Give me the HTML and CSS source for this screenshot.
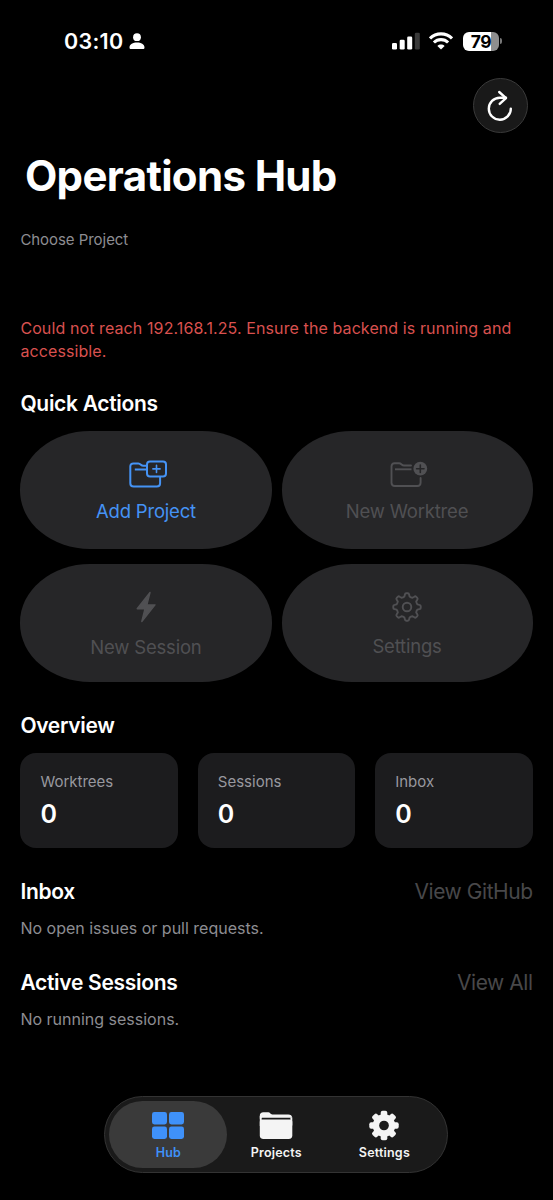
FILE: index.html
```html
<!DOCTYPE html>
<html lang="en">
  <head>
    <meta charset="UTF-8" />
    <meta name="viewport" content="width=device-width, initial-scale=1" />
    <title>Operations Hub</title>
    <link rel="stylesheet" href="styles.css">
  </head>
  <body>
    <!-- status bar -->
    <div class="status-bar">
      <div class="status-left">
        <span class="time">03:10</span>
        <svg width="16" height="17" viewBox="0 0 16 17" fill="#fff">
          <circle cx="8" cy="4.2" r="3.9" />
          <path d="M0.5 14.6C0.5 11.4 4 9.6 8 9.6s7.5 1.8 7.5 5c0 1-.6 1.5-1.6 1.5H2.1c-1 0-1.6-.5-1.6-1.5z" />
        </svg>
      </div>
      <div class="status-right">
        <svg width="28" height="18" viewBox="0 0 28 18" fill="#fff">
          <rect x="0" y="11" width="5" height="6.5" rx="1.3" />
          <rect x="7.7" y="7.8" width="5" height="9.7" rx="1.3" />
          <rect x="15.2" y="4.4" width="5" height="13.1" rx="1.3" />
          <rect x="22.8" y="0.8" width="5" height="16.7" rx="1.3" fill="#3a3a3a" />
        </svg>
        <svg class="wifi" width="24" height="18" viewBox="0 0 24 18" fill="none" stroke="#fff" stroke-width="3.1">
          <path d="M1 6.4C7 0.4 17 0.4 23 6.4" />
          <path d="M4.9 10.5C8.9 6.6 15.1 6.6 19.1 10.5" />
          <path d="M12 17.6l-3.6-3.7c2-1.9 5.2-1.9 7.2 0z" fill="#fff" stroke="none" />
        </svg>
        <div class="battery"><span>79</span></div>
        <div class="battery-cap"></div>
      </div>
    </div>

    <main>
      <button class="refresh">
        <svg width="28" height="32" viewBox="0 0 28 32" fill="none" stroke="#fff" stroke-width="2.4" stroke-linecap="round" stroke-linejoin="round">
          <path d="M24.8 18.6A11 11 0 1 1 13.8 7.7H20" />
          <path d="M13.2 2L20 8.1l-6.3 5.8" />
        </svg>
      </button>
      <h1>Operations Hub</h1>
      <p class="choose">Choose Project</p>
      <p class="error">Could not reach 192.168.1.25. Ensure the backend is running and accessible.</p>

      <h2 class="quick-title">Quick Actions</h2>
      <div class="actions">
        <button class="action active">
          <svg class="folder" width="38" height="28" viewBox="0 0 38 28" fill="none" stroke="currentColor" stroke-width="2" stroke-linecap="round" stroke-linejoin="round">
            <path d="M17.5 5.8h-3.2c-1.2 0-1.6-.3-2.4-1.1-.9-.9-1.4-1.3-2.6-1.3H4.4C2.4 3.4 1.3 4.5 1.3 6.6V23.2c0 2.1 1.2 3.3 3.4 3.3h23.1c2.2 0 3.3-1.2 3.3-3.3V17.5" />
            <path d="M5.8 9.5h11.5" stroke-linecap="butt" />
            <rect x="18" y="1.4" width="19" height="15" rx="3" />
            <path d="M27.5 5.3v7.2M23.9 8.9h7.2" stroke-width="1.6" />
          </svg>
          <span>Add Project</span>
        </button>
        <button class="action">
          <svg class="folder" width="38" height="28" viewBox="0 0 38 28" fill="none" stroke="currentColor" stroke-width="1.9" stroke-linecap="round" stroke-linejoin="round">
            <path d="M21 5.5h-7c-1.2 0-1.6-.3-2.4-1-.9-.8-1.4-1.2-2.6-1.2H4.5C2.5 3.3 1.5 4.4 1.5 6.4V22.8c0 2.1 1.2 3.2 3.3 3.2h22.6c2.1 0 3.2-1.1 3.2-3.2V18" />
            <path d="M5 9.3h16.5" stroke-linecap="butt" />
            <circle cx="30.3" cy="8.7" r="6.9" fill="currentColor" stroke="none" />
            <path d="M30.3 5v7.4M26.6 8.7h7.4" stroke="#262628" stroke-width="1.6" />
          </svg>
          <span>New Worktree</span>
        </button>
        <button class="action">
          <svg class="bolt" width="20" height="32" viewBox="0 0 20 32" fill="currentColor" stroke="currentColor" stroke-width="1.4" stroke-linejoin="round">
            <path d="M14 1.5L1.2 17.7H9L5.8 30.5 19 13.9H10.9z" />
          </svg>
          <span>New Session</span>
        </button>
        <button class="action settings">
          <svg width="30" height="30" viewBox="-15 -15 30 30" fill="none" stroke="currentColor" stroke-width="1.9" stroke-linejoin="round">
            <path d="M-2.1-12.4Q-1.9-13.7-.9-13.7H.9Q1.9-13.7 2.1-12.4L2.6-10.4Q3.8-9.4 5.5-9.2L7.3-10.3Q8.3-11 9.05-10.3L10.3-9.05Q11-8.3 10.3-7.3L9.2-5.5Q9.4-3.8 10.4-2.6L12.4-2.1Q13.7-1.9 13.7-.9V.9Q13.7 1.9 12.4 2.1L10.4 2.6Q9.4 3.8 9.2 5.5L10.3 7.3Q11 8.3 10.3 9.05L9.05 10.3Q8.3 11 7.3 10.3L5.5 9.2Q3.8 9.4 2.6 10.4L2.1 12.4Q1.9 13.7.9 13.7H-.9Q-1.9 13.7-2.1 12.4L-2.6 10.4Q-3.8 9.4-5.5 9.2L-7.3 10.3Q-8.3 11-9.05 10.3L-10.3 9.05Q-11 8.3-10.3 7.3L-9.2 5.5Q-9.4 3.8-10.4 2.6L-12.4 2.1Q-13.7 1.9-13.7.9V-.9Q-13.7-1.9-12.4-2.1L-10.4-2.6Q-9.4-3.8-9.2-5.5L-10.3-7.3Q-11-8.3-10.3-9.05L-9.05-10.3Q-8.3-11-7.3-10.3L-5.5-9.2Q-3.8-9.4-2.6-10.4Z" />
            <circle r="4.3" />
          </svg>
          <span>Settings</span>
        </button>
      </div>

      <h2 class="overview-title">Overview</h2>
      <div class="stats">
        <div class="stat"><span>Worktrees</span><strong>0</strong></div>
        <div class="stat"><span>Sessions</span><strong>0</strong></div>
        <div class="stat"><span>Inbox</span><strong>0</strong></div>
      </div>

      <div class="section-head">
        <h2>Inbox</h2>
        <a>View GitHub</a>
      </div>
      <p class="empty">No open issues or pull requests.</p>
      <div class="section-head">
        <h2>Active Sessions</h2>
        <a>View All</a>
      </div>
      <p class="empty">No running sessions.</p>
    </main>

    <!-- tab bar -->
    <nav class="tab-bar">
      <a class="tab selected">
        <svg width="32" height="30" viewBox="0 0 32 30" fill="currentColor">
          <rect x="0" y="1.5" width="15" height="12.5" rx="2.4" />
          <rect x="17" y="1.5" width="15" height="12.5" rx="2.4" />
          <rect x="0" y="16" width="15" height="12.5" rx="2.4" />
          <rect x="17" y="16" width="15" height="12.5" rx="2.4" />
        </svg>
        <span>Hub</span>
      </a>
      <a class="tab">
        <svg width="34" height="30" viewBox="0 0 34 30" fill="currentColor">
          <path d="M.8 6.6V5.4C.8 3 2 1.8 4.4 1.8h4.2c1.3 0 1.9.3 2.8 1.1.9.8 1.5 1.1 2.7 1.1h15.2c2.4 0 3.6 1.1 3.9 3.3H4.2C2.4 7.3 1.5 7.5.8 8.3z" />
          <path d="M.8 11.5c0-1.7.9-2.6 2.6-2.6h27.2c1.7 0 2.7.9 2.7 2.6v13.2c0 2.5-1.2 3.7-3.7 3.7H4.5C2 28.4.8 27.2.8 24.7z" />
          <path d="M.8 5.5h1.9v10H.8zM31.4 7h1.9v8h-1.9z" />
        </svg>
        <span>Projects</span>
      </a>
      <a class="tab">
        <svg width="32" height="32" viewBox="-16 -16 32 32" fill="currentColor">
          <rect x="-3.4" y="-15.2" width="6.8" height="30.4" rx="2" />
          <rect x="-3.4" y="-15.2" width="6.8" height="30.4" rx="2" transform="rotate(45)" />
          <rect x="-3.4" y="-15.2" width="6.8" height="30.4" rx="2" transform="rotate(90)" />
          <rect x="-3.4" y="-15.2" width="6.8" height="30.4" rx="2" transform="rotate(135)" />
          <circle r="11.6" />
          <circle r="5" fill="#1a1a1a" />
        </svg>
        <span>Settings</span>
      </a>
    </nav>
  </body>
</html>
```

FILE: styles.css
```css
* {
  box-sizing: border-box;
}

body {
  margin: 0;
  height: 1200px;
  overflow: hidden;
  background: #000;
  color: #fff;
  font-family: Inter, "Liberation Sans", sans-serif;
}

h1,
h2,
p {
  margin: 0;
}

button {
  padding: 0;
  border: none;
  font-family: inherit;
}

svg {
  display: block;
  flex: none;
}

/* status bar */
.status-bar {
  display: flex;
  justify-content: space-between;
  height: 78px;
  padding: 0 51px 0 64px;
}
.status-left,
.status-right {
  display: flex;
  align-items: center;
  height: 82px;
}
.time {
  font-size: 21.5px;
  font-weight: 600;
  letter-spacing: 0.3px;
  margin-right: 5px;
}
.wifi {
  margin: 0 10px 0 9px;
}
.battery {
  width: 36px;
  height: 19px;
  border-radius: 6px;
  background: linear-gradient(90deg, #fff 78%, #8e8e8e 78%);
  color: #000;
  font-size: 17.5px;
  font-weight: 700;
  line-height: 19px;
  letter-spacing: -0.5px;
  text-align: center;
}
.battery-cap {
  width: 2px;
  height: 6px;
  margin-left: 1px;
  border-radius: 0 2px 2px 0;
  background: #777;
}

main {
  height: 1018px;
  padding: 0 20.4px;
}

.refresh {
  display: flex;
  align-items: center;
  justify-content: center;
  width: 55px;
  height: 55px;
  margin: 0 5px 0 auto;
  border: 1px solid #3a3a3a;
  border-radius: 50%;
  background: #191919;
}

h1 {
  margin: 18px 0 0 4.5px;
  font-size: 42px;
  font-weight: 700;
  line-height: 50px;
  letter-spacing: -0.65px;
}
.choose {
  margin-top: 29px;
  font-size: 15px;
  line-height: 20px;
  letter-spacing: -0.05px;
  color: #8d8d92;
}
.error {
  margin-top: 67px;
  font-size: 16px;
  line-height: 22.5px;
  letter-spacing: 0.1px;
  color: #d9514f;
}

h2 {
  font-size: 21px;
  font-weight: 600;
  line-height: 28px;
  letter-spacing: -0.3px;
}
.quick-title {
  margin-top: 28px;
}

/* quick actions */
.actions {
  display: grid;
  grid-template-columns: 1fr 1fr;
  gap: 15.5px 10px;
  margin-top: 13px;
}
.action {
  display: flex;
  flex-direction: column;
  align-items: center;
  height: 117.5px;
  padding-top: 28px;
  border-radius: 70px / 58.5px;
  background: #262628;
  color: #505053;
  font-size: 18.5px;
  line-height: 26px;
  letter-spacing: -0.2px;
}
.action span {
  margin-top: 10px;
}
.action .folder {
  margin: 1px 0 0 4px;
}
.action .bolt {
  margin-top: -1px;
}
.action .bolt + span,
.settings span {
  margin-top: 11px;
}
.active {
  color: #4593f5;
}

.overview-title {
  margin-top: 30px;
}
.stats {
  display: grid;
  grid-template-columns: repeat(3, 1fr);
  gap: 20px;
  margin-top: 13.5px;
}
.stat {
  display: flex;
  flex-direction: column;
  height: 95px;
  padding: 19px 20px;
  border-radius: 16px;
  background: #1c1c1e;
}
.stat span {
  font-size: 15px;
  line-height: 20px;
  color: #98989f;
}
.stat strong {
  margin-top: 6px;
  font-size: 25px;
  font-weight: 600;
  line-height: 32px;
}

.section-head {
  display: flex;
  justify-content: space-between;
  margin-top: 30px;
}
.section-head a {
  font-size: 21px;
  line-height: 28px;
  letter-spacing: -0.45px;
  color: #48484a;
}
.empty {
  margin-top: 12px;
  font-size: 16px;
  line-height: 21px;
  color: #8d8d92;
}

/* tab bar */
.tab-bar {
  display: grid;
  grid-template-columns: repeat(3, 108px);
  justify-content: center;
  width: 344px;
  height: 77px;
  margin: 0 auto 0 104.4px;
  padding-top: 4px;
  border: 1px solid #333;
  border-radius: 39px;
  background: #1a1a1a;
}
.tab {
  display: flex;
  flex-direction: column;
  align-items: center;
  height: 67px;
  padding-top: 9px;
  color: #f4f4f4;
  font-size: 12.5px;
  font-weight: 600;
  letter-spacing: 0.2px;
}
.tab svg {
  height: 31px;
}
.tab span {
  margin-top: 4px;
  line-height: 16px;
}
.selected {
  margin: 0 -5px;
  border-radius: 34px;
  background: #3a3a3a;
  color: #3f91f9;
}
```
